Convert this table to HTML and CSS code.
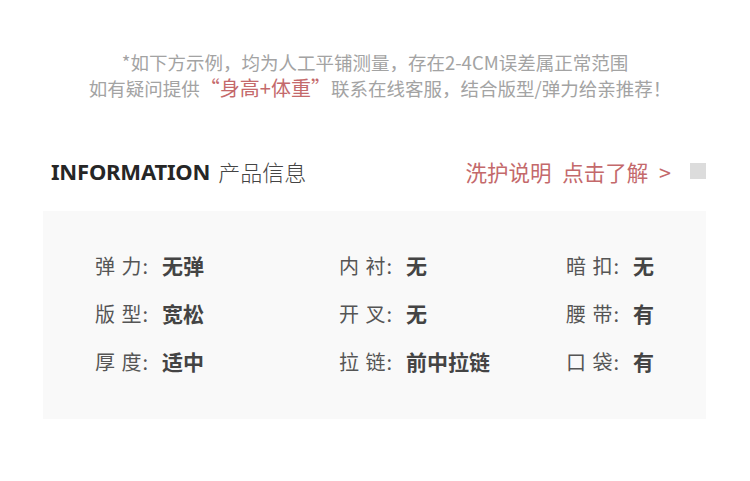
FILE: index.html
```html
<!DOCTYPE html>
<html lang="zh-CN">
<head>
<meta charset="utf-8">
<link rel="stylesheet" href="styles.css">
</head>
<body>
<div class="page">
  <div class="notice">
    <p class="line">*如下方示例，均为人工平铺测量，存在2-4CM误差属正常范围</p>
    <p class="line">如有疑问提供<span class="hl">“身高+体重”</span>联系在线客服，结合版型/弹力给亲推荐！</p>
  </div>
  <div class="header">
    <div class="title"><span class="en">INFORMATION</span> <span class="cn">产品信息</span></div>
    <div class="right">
      <span class="link">洗护说明 点击了解 &gt;</span>
      <span class="square"></span>
    </div>
  </div>
  <div class="box">
    <div class="grid">
      <div class="item"><span class="label">弹 力:</span><span class="val">无弹</span></div>
      <div class="item"><span class="label">内 衬:</span><span class="val">无</span></div>
      <div class="item"><span class="label">暗 扣:</span><span class="val">无</span></div>
      <div class="item"><span class="label">版 型:</span><span class="val">宽松</span></div>
      <div class="item"><span class="label">开 叉:</span><span class="val">无</span></div>
      <div class="item"><span class="label">腰 带:</span><span class="val">有</span></div>
      <div class="item"><span class="label">厚 度:</span><span class="val">适中</span></div>
      <div class="item"><span class="label">拉 链:</span><span class="val">前中拉链</span></div>
      <div class="item"><span class="label">口 袋:</span><span class="val">有</span></div>
    </div>
  </div>
</div>
</body>
</html>
```

FILE: styles.css
```css
* { box-sizing: border-box; }
html, body { margin: 0; padding: 0; background: #fff; }
body {
  font-family: "Noto Sans CJK SC", "Noto Sans", sans-serif;
  width: 750px;
  height: 481px;
  overflow: hidden;
}
.page { padding-top: 49px; }
.notice { text-align: center; color: #a3a3a3; font-size: 18.5px; }
.line { margin: 0; line-height: 26px; }
.line + .line { padding-left: 10px; }
.hl { color: #c4696b; font-size: 20px; }
.header {
  display: flex;
  justify-content: space-between;
  align-items: center;
  margin-top: 55px;
  padding: 0 44px 0 51px;
  height: 30px;
}
.title { display: flex; align-items: center; gap: 8px; }
.en { font-family: "Noto Sans", sans-serif; font-weight: 700; font-size: 22px; color: #262626; letter-spacing: -0.2px; }
.cn { font-size: 22px; color: #444; font-weight: 300; }
.right { display: flex; align-items: center; gap: 19px; }
.link { color: #c4696b; font-size: 21.5px; word-spacing: 6px; }
.square { width: 16px; height: 16px; background: #dcdcdc; }
.box {
  margin: 25px 44px 0 43px;
  background: #f9f9f9;
  height: 208px;
  padding: 40px 0 0 52px;
}
.grid {
  display: grid;
  grid-template-columns: 244px 227px auto;
  row-gap: 20px;
}
.item { display: flex; align-items: center; height: 28px; font-size: 20px; }
.label { color: #555; letter-spacing: 1px; margin-right: 13px; }
.val { color: #444; font-weight: 700; font-size: 21px; }
```
